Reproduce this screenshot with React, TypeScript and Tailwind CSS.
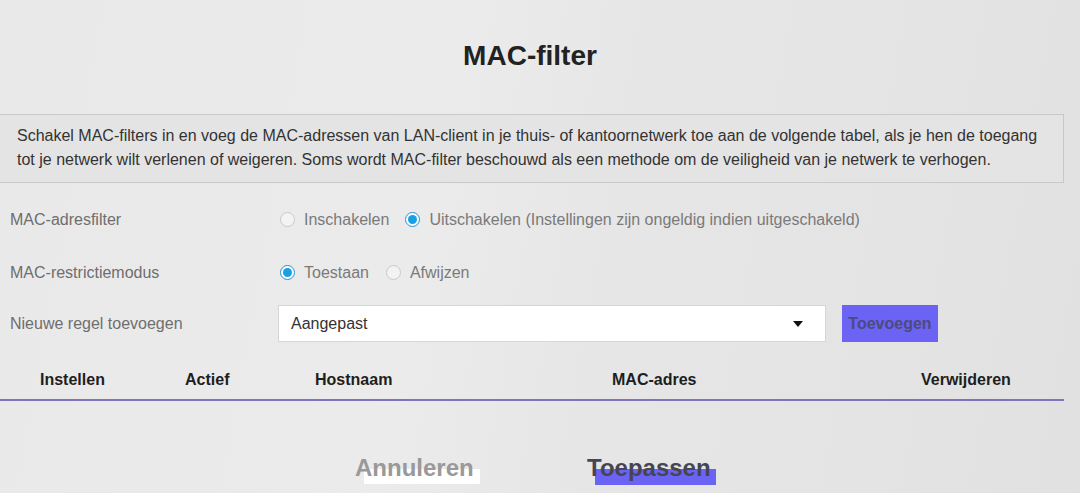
import React from "react";

function Radio({ checked }: { checked?: boolean }) {
  if (checked) {
    return (
      <span className="w-[15px] h-[15px] rounded-full border border-[#1a94dc] bg-white flex items-center justify-center shrink-0">
        <span className="w-[9px] h-[9px] rounded-full bg-[#17a0e6]" />
      </span>
    );
  }
  return <span className="w-[15px] h-[15px] rounded-full border border-[#c9c9c9] bg-[#f3f3f3] shrink-0" />;
}

function RadioOpt({ checked, label }: { checked?: boolean; label: string }) {
  return (
    <span className="flex items-center gap-[9px]">
      <Radio checked={checked} />
      <span className="text-[16px] text-[#7a7a7a]">{label}</span>
    </span>
  );
}

export default function App() {
  return (
    <div
      className="w-[1080px] h-[493px] overflow-hidden bg-[linear-gradient(100deg,#e9e9e9_0%,#ebebeb_40%,#e6e6e6_58%,#e4e4e4_80%,#e1e1e1_100%)]"
      style={{ fontFamily: '"Liberation Sans", Arial, sans-serif' }}
    >
      <div className="w-[1064px]">
        <div className="pt-[38px] h-[114px]">
          <h1 className="text-center text-[28px] leading-[36px] font-bold text-[#222] pr-[4px]">MAC-filter</h1>
        </div>
        <div className="border-y border-r border-[#c9c9c9] bg-[#e4e4e4] pl-[17px] pr-[12px] pt-[9px] pb-[10px] text-[16px] leading-[24px] text-[#333]">
          Schakel MAC-filters in en voeg de MAC-adressen van LAN-client in je thuis- of kantoornetwerk toe aan de volgende tabel, als je hen de toegang tot je netwerk wilt verlenen of weigeren. Soms wordt MAC-filter beschouwd als een methode om de veiligheid van je netwerk te verhogen.
        </div>

        <div className="flex items-center h-[37px] mt-[18px]">
          <span className="w-[280px] pl-[10px] text-[16px] text-[#6e6e6e]">MAC-adresfilter</span>
          <span className="flex items-center gap-[16px]">
            <RadioOpt label="Inschakelen" />
            <RadioOpt checked label="Uitschakelen (Instellingen zijn ongeldig indien uitgeschakeld)" />
          </span>
        </div>
        <div className="flex items-center h-[37px] mt-[16px]">
          <span className="w-[280px] pl-[10px] text-[16px] text-[#6e6e6e]">MAC-restrictiemodus</span>
          <span className="flex items-center gap-[17px]">
            <RadioOpt checked label="Toestaan" />
            <RadioOpt label="Afwijzen" />
          </span>
        </div>
        <div className="flex items-center h-[37px] mt-[14px]">
          <span className="w-[278px] pl-[10px] text-[16px] text-[#6e6e6e]">Nieuwe regel toevoegen</span>
          <div className="w-[548px] h-[37px] bg-white border border-[#d6d6d6] flex items-center justify-between pl-[12px] pr-[22px]">
            <span className="text-[16px] text-[#333]">Aangepast</span>
            <svg width="10" height="6" viewBox="0 0 10 6">
              <path d="M0 0 H10 L5 6 Z" fill="#111" />
            </svg>
          </div>
          <button className="ml-[16px] w-[96px] h-[37px] bg-[#6b63f4] text-[16px] font-bold text-[#4d4a80] flex items-center justify-center">
            Toevoegen
          </button>
        </div>

        <div className="mt-[19px] flex items-center h-[38px] text-[16px] font-bold text-[#1e1e1e]">
          <span className="w-[185px] pl-[40px]">Instellen</span>
          <span className="w-[130px]">Actief</span>
          <span className="w-[297px]">Hostnaam</span>
          <span className="w-[309px]">MAC-adres</span>
          <span>Verwijderen</span>
        </div>
        <div className="h-[2px] bg-[#7c74bd]" />
      </div>

      <div className="flex justify-center gap-[115px] mt-[68px] w-[1080px]">
        <div className="w-[116px] h-[15px] bg-white">
          <span className="relative -top-[13px] -left-[9px] block text-[24px] leading-[24px] font-bold text-[#999] whitespace-nowrap">
            Annuleren
          </span>
        </div>
        <div className="w-[121px] h-[16px] bg-[#6b63f4]">
          <span className="relative -top-[13px] -left-[8px] block text-[24px] leading-[24px] font-bold text-[#474552] whitespace-nowrap">
            Toepassen
          </span>
        </div>
      </div>
    </div>
  );
}
